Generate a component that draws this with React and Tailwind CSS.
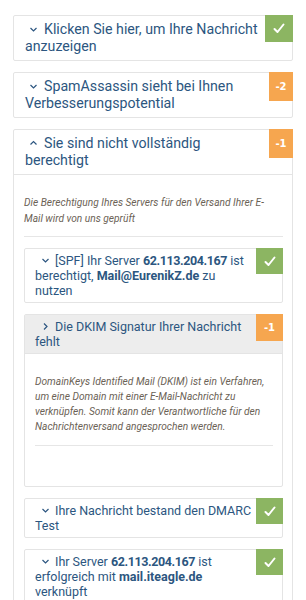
import React from 'react';

const TITLE = 'text-[#2c5680]';

function Badge({ kind, small }) {
  if (kind === 'ok') {
    return (
      <div className={`shrink-0 -mt-px -mr-px flex items-center justify-center bg-[#8cb562] ${small ? 'w-[27px] h-[26px]' : 'w-[28px] h-[27px]'}`}>
        <svg width="12" height="11" viewBox="0 0 12 11">
          <path d="M1.5 6 L4.5 9 L10.5 1.5" fill="none" stroke="#fff" strokeWidth="2" strokeLinecap="round" strokeLinejoin="round" />
        </svg>
      </div>
    );
  }
  return (
    <div className={`shrink-0 -mt-px -mr-px flex items-center justify-center bg-[#f6a64f] text-white text-[10px] font-bold ${small ? 'w-[27px] h-[27px]' : 'w-[24px] h-[29px]'}`} style={{ fontFamily: '"DejaVu Sans", sans-serif' }}>
      {kind}
    </div>
  );
}

function Chevron({ dir, inner }) {
  const d = dir === 'up' ? 'M0.5 4.5 L3.5 1.5 L6.5 4.5' : dir === 'right' ? 'M2 0.5 L5 3.5 L2 6.5' : 'M0.5 2 L3.5 5 L6.5 2';
  return (
    <svg width="7" height="7" viewBox="0 0 7 7" className={`inline align-[1px] ${inner ? 'ml-[7px] mr-[6px]' : 'ml-[5px] mr-[7px]'}`}>
      <path d={d} fill="none" stroke="#2c5680" strokeWidth="1.2" />
    </svg>
  );
}

function OuterCard({ title, badge, dir = 'down', children }) {
  return (
    <div className="border border-[#e4e4e4] rounded-[2px] bg-white">
      <div className={`flex items-start ${children ? 'border-b border-[#e4e4e4]' : ''}`}>
        <div className={`flex-1 pl-[11px] pr-[4px] pt-[5px] pb-[5px] text-[14.2px] leading-[17px] ${TITLE}`}>
          <Chevron dir={dir} />
          {title}
        </div>
        <Badge kind={badge} />
      </div>
      {children}
    </div>
  );
}

function InnerCard({ title, badge, dir = 'down', gray, children }) {
  return (
    <div className="border border-[#e4e4e4] rounded-[2px] bg-white">
      <div className={`flex items-start ${gray ? 'bg-[#ededed] border-b border-[#e4e4e4]' : ''}`}>
        <div className={`flex-1 pl-[10px] pr-[4px] pt-[4px] pb-[4px] text-[12.5px] leading-[15px] ${TITLE}`}>
          <Chevron dir={dir} inner />
          {title}
        </div>
        <Badge kind={badge} small />
      </div>
      {children}
    </div>
  );
}

const note = 'italic text-[10.2px] text-[#6b6256]';
const ip = 'font-bold tracking-[-0.4px]';

export default function App() {
  return (
    <div className="bg-white min-h-[600px] px-[13px] pt-[15px] flex flex-col gap-[11px]" style={{ fontFamily: 'Roboto, "Open Sans", sans-serif' }}>
      <OuterCard title="Klicken Sie hier, um Ihre Nachricht anzuzeigen" badge="ok" />
      <OuterCard title="SpamAssassin sieht bei Ihnen Verbesserungspotential" badge="-2" />
      <OuterCard title="Sie sind nicht vollständig berechtigt" badge="-1" dir="up">
        <div className="pl-[10px] pr-[9px] pt-[20px]">
          <p className={`${note} leading-[16px] pr-[14px]`}>
            Die Berechtigung Ihres Servers für den Versand Ihrer E-Mail wird von uns geprüft
          </p>
          <div className="mt-[9px] mb-[11px] h-px bg-[#e6e6e6]" />
          <div className="flex flex-col gap-[11px]">
            <InnerCard
              badge="ok"
              title={<>[SPF] Ihr Server <b className={ip}>62.113.204.167</b> ist berechtigt, <b>Mail@EurenikZ.de</b> zu nutzen</>}
            />
            <InnerCard badge="-1" dir="right" gray title="Die DKIM Signatur Ihrer Nachricht fehlt">
              <div className="pl-[10px] pr-[9px] pt-[20px] pb-[40px]">
                <p className={`${note} leading-[15px]`}>
                  DomainKeys Identified Mail (DKIM) ist ein Verfahren, um eine Domain mit einer E-Mail-Nachricht zu verknüpfen. Somit kann der Verantwortliche für den Nachrichtenversand angesprochen werden.
                </p>
                <div className="mt-[11px] h-px bg-[#e6e6e6]" />
              </div>
            </InnerCard>
            <InnerCard badge="ok" title="Ihre Nachricht bestand den DMARC Test" />
            <InnerCard
              badge="ok"
              title={<>Ihr Server <b className={ip}>62.113.204.167</b> ist erfolgreich mit <b>mail.iteagle.de</b> verknüpft</>}
            />
          </div>
        </div>
      </OuterCard>
    </div>
  );
}
